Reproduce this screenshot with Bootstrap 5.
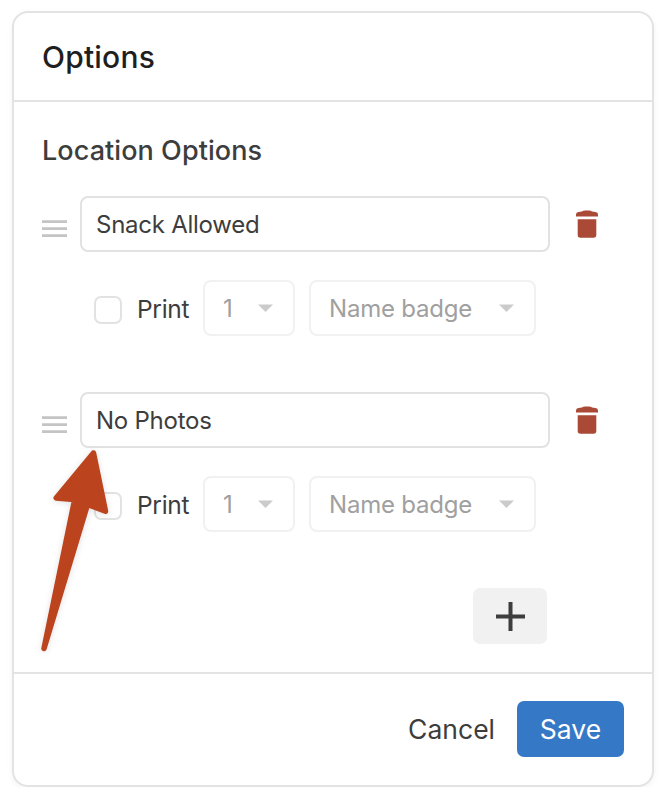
<!DOCTYPE html>
<html lang="en">
<head>
<meta charset="utf-8">
<meta name="viewport" content="width=device-width, initial-scale=1">
<title>Options</title>
<link href="https://cdn.jsdelivr.net/npm/bootstrap@5.3.0/dist/css/bootstrap.min.css" rel="stylesheet">
<style>
body{font-family:Inter,"Liberation Sans",sans-serif;color:#3d3d3d;background:#fff}
.panel{width:642px;height:776px;margin:11px 0 0 12px;border:2px solid #e3e3e3;border-radius:16px;box-shadow:0 2px 6px rgba(0,0,0,.05);position:relative}
.panel-top{height:89px;padding:0 28px;border-bottom:2px solid #e3e3e3}
.panel-top h1{font-size:30px;font-weight:500;color:#1f1f1f;letter-spacing:.2px;margin:1px 0 0}
.panel-mid{height:570px;padding:33px 28px 0}
.panel-mid h2{font-size:27px;line-height:32px;font-weight:500;letter-spacing:.07px;margin-bottom:29px}
.option{height:140px}
.grip{width:25px;height:18px;margin:10px 13px 0 0}
.name-field{width:470px;height:56px;border:2px solid #e2e2e2;border-radius:8px;font-size:24px;line-height:54px;padding:0 14px;color:#3d3d3d;letter-spacing:-.25px}
.trash{width:22px;height:28px;margin-left:26px}
.print-row{margin-top:28px;padding-left:52px}
.print-row .form-check-input{width:28px;height:28px;margin:3px 15px 0 0;border:2px solid #e2e2e2;border-radius:7px}
.print-label{font-size:24.5px;width:66px;letter-spacing:-.3px;padding-top:2px}
.picker{height:56px;border:2px solid #f1f1f1;border-radius:8px;font-size:24px;color:#a0a0a0;padding:0 20px 0 18px;letter-spacing:-.2px}
.picker span{padding-top:2px}
.picker-num{width:92px;margin-right:14px}
.picker-kind{width:227px}
.add{width:74px;height:56px;margin:56px 77px 0 0;background:#f1f1f1;border-radius:7px}
.panel-end{height:112px;border-top:2px solid #e3e3e3;padding:0 28px}
.panel-end .btn{font-size:26.5px;height:56px;padding:2px 0 0;border:0}
.cancel{color:#3d3d3d;margin-right:22px}
.save{width:107px;background:#3578c6;color:#fff;border-radius:7px}
.pointer{position:absolute;left:6px;top:418px;filter:drop-shadow(0 1px 3px rgba(0,0,0,.12))}
</style>
</head>
<body>
<main class="panel d-flex flex-column">
  <header class="panel-top d-flex align-items-center flex-shrink-0"><h1>Options</h1></header>
  <section class="panel-mid flex-shrink-0">
    <h2>Location Options</h2>
    <div class="option">
      <div class="d-flex align-items-center">
        <svg class="grip" viewBox="0 0 25 18"><path d="M0 1.6h25M0 8.7h25M0 15.7h25" stroke="#c4c4c4" stroke-width="2.8"/></svg>
        <div class="form-control name-field">Snack Allowed</div>
        <svg class="trash" viewBox="0 0 22 28"><path d="M0 6.5V4.5Q0 2.3 2.5 2.1L6 1.6Q7 .4 9 .4h4q2 0 3 1.2l3.5.5Q22 2.3 22 4.5v2zM1.7 9.2h18.6V25q0 2.7-2.7 2.7H4.4Q1.7 27.7 1.7 25z" fill="#aa4935"/></svg>
      </div>
      <div class="print-row d-flex align-items-center">
        <input class="form-check-input" type="checkbox" aria-label="Print">
        <span class="print-label">Print</span>
        <div class="picker picker-num d-flex align-items-center justify-content-between"><span>1</span><svg width="15" height="8"><path d="M0 .5h15L7.5 8z" fill="#cbcbcb"/></svg></div>
        <div class="picker picker-kind d-flex align-items-center justify-content-between"><span>Name badge</span><svg width="15" height="8"><path d="M0 .5h15L7.5 8z" fill="#cbcbcb"/></svg></div>
      </div>
    </div>
    <div class="option mt-5 pt-2">
      <div class="d-flex align-items-center">
        <svg class="grip" viewBox="0 0 25 18"><path d="M0 1.6h25M0 8.7h25M0 15.7h25" stroke="#c4c4c4" stroke-width="2.8"/></svg>
        <div class="form-control name-field">No Photos</div>
        <svg class="trash" viewBox="0 0 22 28"><path d="M0 6.5V4.5Q0 2.3 2.5 2.1L6 1.6Q7 .4 9 .4h4q2 0 3 1.2l3.5.5Q22 2.3 22 4.5v2zM1.7 9.2h18.6V25q0 2.7-2.7 2.7H4.4Q1.7 27.7 1.7 25z" fill="#aa4935"/></svg>
      </div>
      <div class="print-row d-flex align-items-center">
        <input class="form-check-input" type="checkbox" aria-label="Print">
        <span class="print-label">Print</span>
        <div class="picker picker-num d-flex align-items-center justify-content-between"><span>1</span><svg width="15" height="8"><path d="M0 .5h15L7.5 8z" fill="#cbcbcb"/></svg></div>
        <div class="picker picker-kind d-flex align-items-center justify-content-between"><span>Name badge</span><svg width="15" height="8"><path d="M0 .5h15L7.5 8z" fill="#cbcbcb"/></svg></div>
      </div>
    </div>
    <div class="d-flex justify-content-end pt-2">
      <button class="btn add p-0 border-0 d-flex align-items-center justify-content-center" type="button" aria-label="Add option"><svg width="29" height="29"><path d="M0 14.5h29M14.5 0v29" stroke="#3d3d3d" stroke-width="4"/></svg></button>
    </div>
  </section>
  <footer class="panel-end d-flex align-items-center justify-content-end flex-shrink-0">
    <button class="btn cancel" type="button">Cancel</button>
    <button class="btn save" type="button">Save</button>
  </footer>
  <svg class="pointer" width="110" height="230" viewBox="0 0 110 230"><path d="M73.500 22L36.200 67 54 68.500 54 72 24 217.500 67.500 73.500 85.500 80.200z" transform="translate(0 0)" fill="#bb431e" stroke="#bb431e" stroke-width="5.500" stroke-linejoin="round"/></svg>
</main>
<script src="https://cdn.jsdelivr.net/npm/bootstrap@5.3.0/dist/js/bootstrap.bundle.min.js"></script>
</body>
</html>
